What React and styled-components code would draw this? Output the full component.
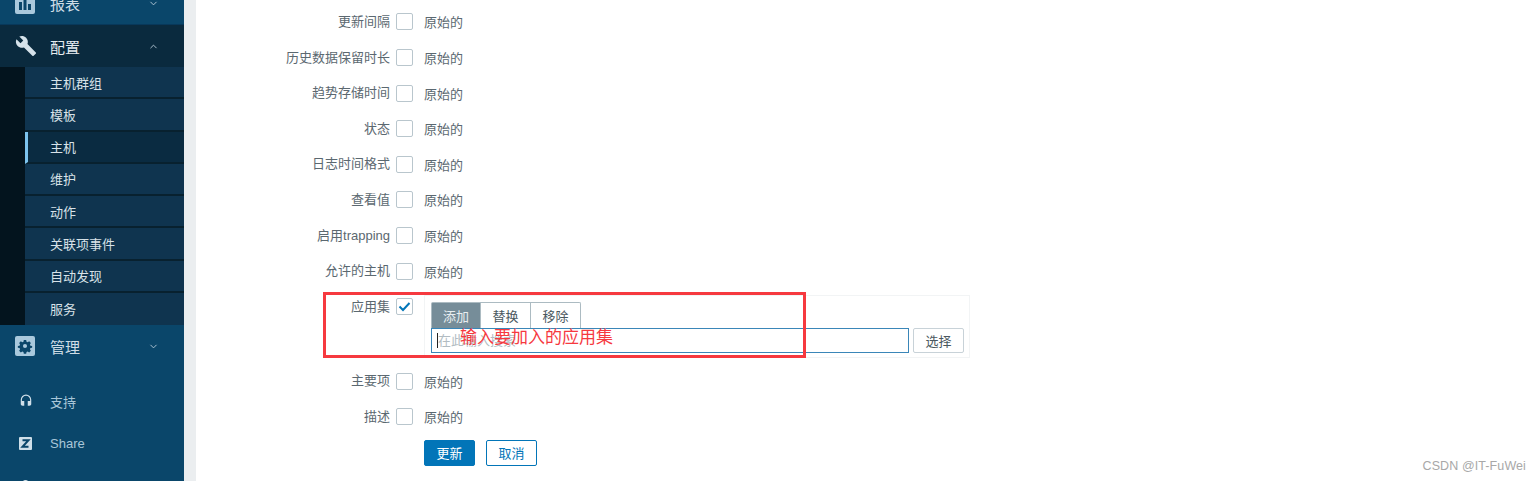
import React from "react";
import styled, { createGlobalStyle } from "styled-components";
import { MdBuild, MdHeadset } from "react-icons/md";
import { FiChevronDown, FiChevronUp } from "react-icons/fi";

const Global = createGlobalStyle`
  html, body { margin: 0; padding: 0; background: #fff; }
  body { font-family: "Liberation Sans", "Noto Sans CJK SC", Arial, sans-serif; font-size: 13px; color: #5b6870; }
  * { box-sizing: border-box; }
`;

const Page = styled.div`
  position: relative;
  display: flex;
  width: 1540px;
  height: 481px;
  overflow: hidden;
  background: #fff;
`;

const Sidebar = styled.nav`
  flex: 0 0 184px;
  height: 481px;
  overflow: hidden;
  background: #0a466a;
`;

const Strip = styled.div`
  flex: 0 0 12px;
  background: #ebeef0;
`;

const Section = styled.div`
  display: flex;
  align-items: center;
  height: 42px;
  padding-left: 15px;
  font-size: 15px;
  color: ${p => (p.$open ? "#e6ecf0" : "#cfdde6")};
  background: ${p => (p.$open ? "#0a2a3e" : "transparent")};
  margin-top: ${p => p.$offset || 0}px;
  border-bottom: ${p => (p.$offset ? "1px solid #08385a" : "none")};
`;

const IconSlot = styled.span`
  flex: 0 0 35px;
  display: flex;
  align-items: center;
  color: #d5e2ea;
`;

const SectionLabel = styled.span`
  flex: 1;
`;

const Chevron = styled.span`
  display: flex;
  width: 36px;
  color: #b7cbd8;
  font-size: 11px;
`;

const SubWrap = styled.div`
  display: flex;
  height: 258px;
  background: #03141e;
  padding-left: 25px;
`;

const SubList = styled.ul`
  flex: 1;
  list-style: none;
  margin: 0;
  padding: 0;
`;

const SubItem = styled.li`
  display: flex;
  align-items: center;
  height: 32.25px;
  padding-left: ${p => (p.$active ? 22 : 25)}px;
  border-left: ${p => (p.$active ? "3px solid #7cc3ee" : "none")};
  border-bottom: 2px solid #08212f;
  background: ${p => (p.$active ? "#0a2b41" : "#0f344f")};
  color: #d8e2e8;
  &:last-child { border-bottom: none; }
`;

const Extras = styled.div`
  margin-top: 13px;
`;

const ExtraItem = styled.div`
  display: flex;
  align-items: center;
  height: 42px;
  padding-left: 19px;
  color: #a9c6d9;
`;

const ExtraIcon = styled.span`
  flex: 0 0 31px;
  display: flex;
  align-items: center;
  color: #cfdfe9;
`;

const Main = styled.main`
  flex: 1;
  padding-top: 4.2px;
`;

const Row = styled.div`
  display: flex;
  align-items: ${p => (p.$top ? "flex-start" : "center")};
  height: ${p => (p.$tall ? 74.4 : 35.6)}px;
  padding-top: ${p => (p.$tall ? 9 : 0)}px;
`;

const Label = styled.label`
  flex: 0 0 194px;
  text-align: right;
  line-height: 18px;
  color: #5b6870;
`;

const Check = styled.span`
  flex: 0 0 17px;
  display: flex;
  align-items: center;
  justify-content: center;
  height: 17px;
  margin-left: 6px;
  background: #fff;
  border: 1px solid #b9c6cd;
  border-radius: 2px;
`;

const Value = styled.span`
  margin-left: 11px;
  color: #5b6870;
`;

const ValueBox = styled.div`
  width: 546px;
  height: 63px;
  margin-left: 11px;
  margin-top: -3px;
  padding: 6px 5px 0 6px;
  border: 1px solid #f2f4f5;
`;

const Tabs = styled.div`
  display: flex;
`;

const Tab = styled.span`
  width: 50px;
  height: 26px;
  display: flex;
  align-items: center;
  justify-content: center;
  margin-right: ${p => (p.$active ? 0 : 0)}px;
  color: ${p => (p.$active ? "#e8edf0" : "#4a5860")};
  background: ${p => (p.$active ? "#768d99" : "#fff")};
  border: 1px solid #acbbc2;
  border-left-width: ${p => (p.$active ? 1 : 0)}px;
  border-bottom: none;
  border-radius: ${p => p.$radius};
`;

const InputLine = styled.div`
  display: flex;
  gap: 4px;
`;

const SearchField = styled.div`
  position: relative;
  width: 479px;
  height: 25px;
`;

const SearchInput = styled.input`
  width: 100%;
  height: 100%;
  padding: 0 0 0 6px;
  border: 1px solid #3a86b8;
  outline: none;
  font: 13px "Liberation Sans", "Noto Sans CJK SC", sans-serif;
  &::placeholder { color: #b2bcc2; opacity: 1; }
`;

const Caret = styled.span`
  position: absolute;
  left: 6px;
  top: 5px;
  width: 1px;
  height: 15px;
  background: #222;
`;

const SelectButton = styled.button`
  width: 51px;
  height: 25px;
  padding: 0;
  background: #fff;
  border: 1px solid #c8d2d8;
  border-radius: 2px;
  color: #4a5860;
  font: 13px "Liberation Sans", "Noto Sans CJK SC", sans-serif;
`;

const Actions = styled.div`
  display: flex;
  gap: 11px;
  margin: 5px 0 0 228px;
`;

const ActionButton = styled.button`
  width: ${p => (p.$primary ? 51 : 51)}px;
  height: 26px;
  padding: 0;
  border: 1px solid #0275b8;
  border-radius: 2px;
  background: ${p => (p.$primary ? "#0275b8" : "#fff")};
  color: ${p => (p.$primary ? "#fff" : "#0275b8")};
  font: 13px "Liberation Sans", "Noto Sans CJK SC", sans-serif;
`;

const Annotation = styled.div`
  position: absolute;
  left: 323px;
  top: 292px;
  width: 483px;
  height: 66px;
  border: 3px solid #f6393f;
  pointer-events: none;
`;

const AnnotationText = styled.span`
  position: absolute;
  left: 134px;
  top: 33px;
  font-size: 17px;
  line-height: 20px;
  white-space: nowrap;
  color: #f6393f;
`;

const Watermark = styled.span`
  position: absolute;
  right: 14px;
  top: 459px;
  font-size: 12.5px;
  line-height: 15px;
  letter-spacing: 0.1px;
  color: #a8a8a8;
`;

const ReportIcon = () => (
  <svg width="20" height="20" viewBox="0 0 20 20">
    <path fill="#a9c9dd" d="M2 0h16a2 2 0 0 1 2 2v16a2 2 0 0 1-2 2H2a2 2 0 0 1-2-2V2a2 2 0 0 1 2-2z" />
    <path fill="#0a466a" d="M4 8h3v8H4zM8.5 4h3v12h-3zM13 10h3v6h-3z" />
  </svg>
);

const GearIcon = () => (
  <svg width="20" height="20" viewBox="0 0 20 20">
    <rect width="20" height="20" rx="2" fill="#a9c9dd" />
    <path
      fill="#0a466a"
      fillRule="evenodd"
      d="M8.6 3h2.8l.4 2 1.4.6 1.7-1.1 2 2-1.1 1.7.6 1.4 2 .4v2.8-.8l-2 .4-.6 1.4 1.1 1.7-2 2-1.7-1.1-1.4.6-.4 2H8.6l-.4-2-1.4-.6-1.7 1.1-2-2 1.1-1.7-.6-1.4-2-.4v-2l2-.4.6-1.4-1.1-1.7 2-2 1.7 1.1 1.4-.6zM10 7.6a2.4 2.4 0 1 0 0 4.8 2.4 2.4 0 0 0 0-4.8z"
      transform="translate(1.5 1.5) scale(.85)"
    />
  </svg>
);

const ZIcon = () => (
  <svg width="13" height="13" viewBox="0 0 13 13">
    <rect width="13" height="13" rx="1" fill="#cfdfe9" />
    <path fill="none" stroke="#0a466a" strokeWidth="2" d="M3.5 3.2h6L3.5 9.8h6" />
  </svg>
);

const UserIcon = () => (
  <svg width="13" height="13" viewBox="0 0 13 13">
    <circle cx="6.5" cy="4" r="3" fill="#cfdfe9" />
    <path fill="#cfdfe9" d="M1 13c0-4 2-5 5.500-5s5.500 1 5.500 5z" />
  </svg>
);

const Tick = () => (
  <svg width="13" height="11" viewBox="0 0 13 11">
    <path fill="none" stroke="#0275b8" strokeWidth="2" d="M1.500 5.500l3.500 3.500 6.500-7" />
  </svg>
);

const subItems = ["主机群组", "模板", "主机", "维护", "动作", "关联项事件", "自动发现", "服务"];
const beforeRows = ["更新间隔", "历史数据保留时长", "趋势存储时间", "状态", "日志时间格式", "查看值", "启用trapping", "允许的主机"];
const afterRows = ["主要项", "描述"];

const FieldRow = ({ label }) => (
  <Row>
    <Label>{label}</Label>
    <Check />
    <Value>原始的</Value>
  </Row>
);

export default function App() {
  return (
    <Page>
      <Global />
      <Sidebar>
        <Section $offset={-17}>
          <IconSlot><ReportIcon /></IconSlot>
          <SectionLabel>报表</SectionLabel>
          <Chevron><FiChevronDown /></Chevron>
        </Section>
        <Section $open>
          <IconSlot><MdBuild size={22} /></IconSlot>
          <SectionLabel>配置</SectionLabel>
          <Chevron><FiChevronUp /></Chevron>
        </Section>
        <SubWrap>
          <SubList>
            {subItems.map(s => (
              <SubItem key={s} $active={s === "主机"}>{s}</SubItem>
            ))}
          </SubList>
        </SubWrap>
        <Section>
          <IconSlot><GearIcon /></IconSlot>
          <SectionLabel>管理</SectionLabel>
          <Chevron><FiChevronDown /></Chevron>
        </Section>
        <Extras>
          <ExtraItem>
            <ExtraIcon><MdHeadset size={14} /></ExtraIcon>
            支持
          </ExtraItem>
          <ExtraItem>
            <ExtraIcon><ZIcon /></ExtraIcon>
            Share
          </ExtraItem>
          <ExtraItem>
            <ExtraIcon><UserIcon /></ExtraIcon>
          </ExtraItem>
        </Extras>
      </Sidebar>
      <Strip />
      <Main>
        {beforeRows.map(l => <FieldRow key={l} label={l} />)}
        <Row $tall $top>
          <Label>应用集</Label>
          <Check><Tick /></Check>
          <ValueBox>
            <Tabs>
              <Tab $active $radius="2px 0 0 0">添加</Tab>
              <Tab>替换</Tab>
              <Tab $radius="0 2px 0 0">移除</Tab>
            </Tabs>
            <InputLine>
              <SearchField>
                <SearchInput placeholder="在此输入搜索" readOnly />
                <Caret />
              </SearchField>
              <SelectButton>选择</SelectButton>
            </InputLine>
          </ValueBox>
        </Row>
        {afterRows.map(l => <FieldRow key={l} label={l} />)}
        <Actions>
          <ActionButton $primary>更新</ActionButton>
          <ActionButton>取消</ActionButton>
        </Actions>
      </Main>
      <Annotation>
        <AnnotationText>输入要加入的应用集</AnnotationText>
      </Annotation>
      <Watermark>CSDN @IT-FuWei</Watermark>
    </Page>
  );
}
